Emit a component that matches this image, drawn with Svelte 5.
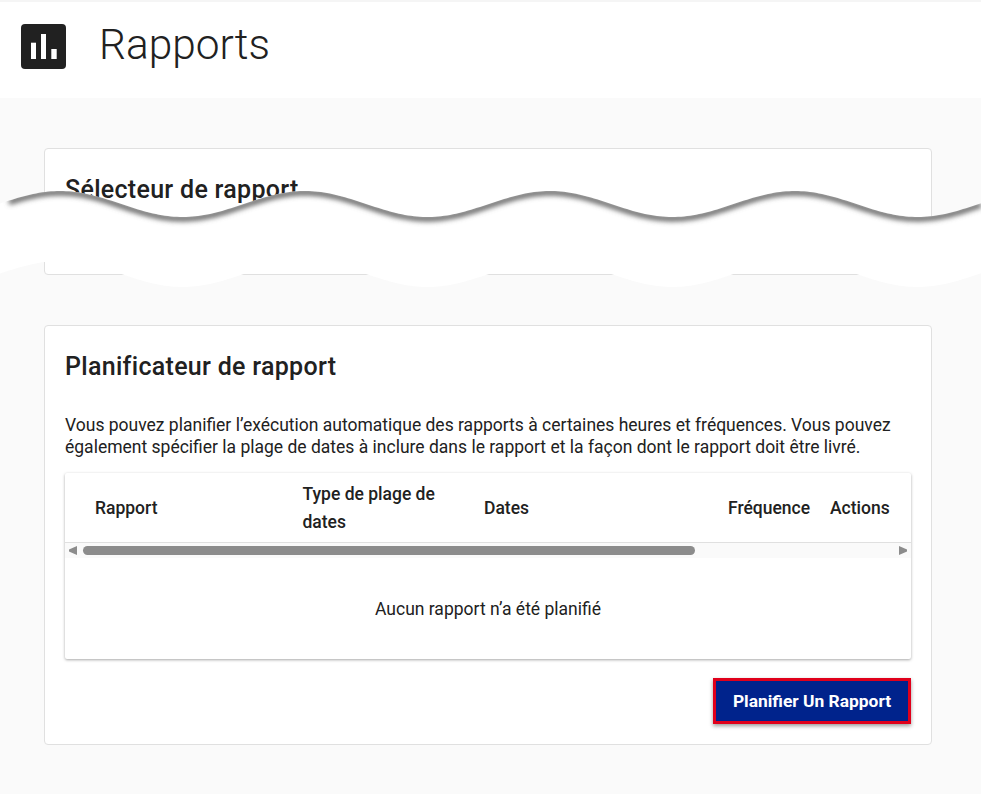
<script>
  const mid = 204, amp = 13, period = 245, peak = 60;
  const wave = (dy) => {
    let d = [];
    for (let x = 0; x <= 981; x += 3) {
      const y = mid + dy - amp * Math.cos((2 * Math.PI * (x - peak)) / period);
      d.push(`${x} ${y.toFixed(2)}`);
    }
    d.push(`981 ${(mid + dy - amp * Math.cos((2 * Math.PI * (981 - peak)) / period)).toFixed(2)}`);
    return d;
  };
  const top = wave(0);
  const bottom = wave(70);
  const tornLine = 'M' + top.slice(3).join('L');
  const shape = 'M' + top.join('L') + 'L' + bottom.slice().reverse().join('L') + 'Z';
  const columns = ['Rapport', 'Type de plage de dates', 'Dates', 'Fréquence', 'Actions'];
</script>

<div class="page">
  <header class="topbar">
    <span class="logo">
      <svg viewBox="0 0 45 45" width="45" height="45" aria-hidden="true">
        <rect x="10" y="18.700" width="5" height="16.300" fill="#fff" />
        <rect x="20" y="10" width="5" height="25" fill="#fff" />
        <rect x="30.300" y="25" width="5.400" height="10" fill="#fff" />
      </svg>
    </span>
    <h1>Rapports</h1>
  </header>

  <main class="content">
    <section class="card selector">
      <h2>Sélecteur de rapport</h2>
    </section>

    <section class="card planner">
      <h2>Planificateur de rapport</h2>
      <p>Vous pouvez planifier l’exécution automatique des rapports à certaines heures et fréquences. Vous pouvez également spécifier la plage de dates à inclure dans le rapport et la façon dont le rapport doit être livré.</p>
      <div class="table">
        <div class="thead">
          {#each columns as col}
            <div class="th">{col}</div>
          {/each}
        </div>
        <div class="scrollbar">
          <span class="arrow left"></span>
          <span class="track"><span class="thumb"></span></span>
          <span class="arrow right"></span>
        </div>
        <div class="empty">Aucun rapport n’a été planifié</div>
      </div>
      <div class="actions">
        <button type="button">Planifier Un Rapport</button>
      </div>
    </section>
  </main>

  <svg class="torn" width="981" height="794" viewBox="0 0 981 794" aria-hidden="true">
    <defs>
      <clipPath id="tornclip"><path d={shape} /></clipPath>
      <filter id="tornblur" x="-5%" y="-50%" width="110%" height="200%">
        <feGaussianBlur stdDeviation="2.600" />
      </filter>
    </defs>
    <path d={shape} fill="#fff" />
    <g clip-path="url(#tornclip)">
      <path d={tornLine} transform="translate(0 1.5)" fill="none" stroke="#6a6a6a" stroke-width="6" filter="url(#tornblur)" />
    </g>
  </svg>
</div>

<style>
  :global(body) {
    margin: 0;
    background: #fafafa;
  }
  .page {
    position: relative;
    width: 981px;
    height: 794px;
    overflow: hidden;
    background: #fafafa;
    font-family: Roboto, sans-serif;
    color: #212121;
  }
  .topbar {
    display: flex;
    align-items: center;
    gap: 33px;
    height: 96px;
    margin-top: 2px;
    padding-left: 21px;
    background: #fff;
    box-sizing: border-box;
  }
  .page::before {
    content: '';
    display: block;
    height: 2px;
    margin-bottom: -2px;
    background: #f5f5f5;
  }
  .logo {
    display: block;
    width: 45px;
    height: 45px;
    border-radius: 4px;
    background: #212121;
    margin-top: -7px;
  }
  .logo svg {
    display: block;
  }
  h1 {
    margin: -11px 0 0;
    font-size: 42.400px;
    font-weight: 300;
    line-height: 50px;
  }
  .content {
    display: flex;
    flex-direction: column;
    gap: 50px;
    padding: 50px 49px 0 44px;
  }
  .card {
    box-sizing: border-box;
    background: #fff;
    border: 1px solid #e0e0e0;
    border-radius: 4px;
    padding: 20px;
  }
  .selector {
    height: 127px;
  }
  .planner {
    height: 420px;
  }
  h2 {
    margin: 7px 0 0;
    font-size: 25px;
    font-weight: 500;
    line-height: 28px;
    letter-spacing: 0.3px;
  }
  p {
    margin: 33px 0 0;
    font-size: 17.500px;
    line-height: 22px;
  }
  .table {
    margin-top: 15px;
    background: #fff;
    border-radius: 2px;
    box-shadow: 0 1px 3px rgba(0, 0, 0, 0.35);
  }
  .thead {
    display: grid;
    grid-template-columns: 207.500px 181.500px 244px 102px 1fr;
    align-items: center;
    height: 70px;
    padding-left: 30px;
    box-sizing: border-box;
    border-bottom: 1px solid #e0e0e0;
  }
  .th {
    font-size: 17.500px;
    font-weight: 500;
    line-height: 28px;
    padding-right: 16px;
  }
  .scrollbar {
    display: flex;
    align-items: center;
    height: 15px;
    background: #fafafa;
    padding: 0 4px;
    gap: 6px;
  }
  .track {
    flex: 1;
    display: block;
  }
  .thumb {
    display: block;
    width: 612px;
    height: 9px;
    border-radius: 5px;
    background: #8c8c8c;
  }
  .arrow {
    width: 8px;
    height: 9px;
    background: #8c8c8c;
  }
  .arrow.left {
    clip-path: polygon(100% 0, 100% 100%, 0 60%, 0 40%);
  }
  .arrow.right {
    clip-path: polygon(0 0, 0 100%, 100% 60%, 100% 40%);
  }
  .empty {
    height: 101px;
    display: flex;
    align-items: center;
    justify-content: center;
    font-size: 17.500px;
  }
  .actions {
    display: flex;
    justify-content: flex-end;
    margin-top: 19px;
  }
  button {
    width: 198px;
    height: 46px;
    background: #00238c;
    color: #fff;
    border: 3px solid #e0001b;
    border-radius: 0;
    font-family: Roboto, sans-serif;
    font-size: 17.400px;
    font-weight: 700;
    box-shadow: 0 2px 4px rgba(0, 0, 0, 0.4);
  }
  .torn {
    position: absolute;
    left: 0;
    top: 0;
    pointer-events: none;
  }
</style>
